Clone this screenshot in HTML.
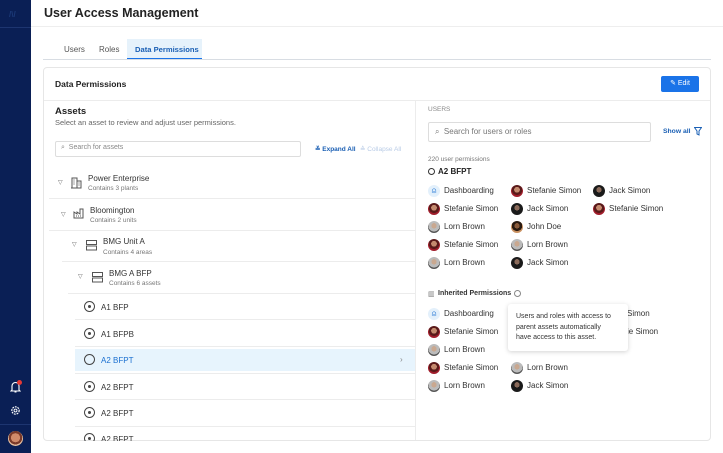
<!DOCTYPE html><html><head><style>
*{margin:0;padding:0;box-sizing:border-box}
body{width:723px;height:453px;overflow:hidden;background:#fff;font-family:"Liberation Sans",sans-serif;color:#222;position:relative}
.a{position:absolute;white-space:nowrap}
.sb{left:0;top:0;width:31px;height:453px;background:#0a1f55}
.t{font-size:8px;color:#333}
.s{font-size:6.5px;color:#777}
.av{position:absolute;width:12px;height:12px;border-radius:50%}
.f{background:radial-gradient(circle at 50% 40%,#c48a6e 0 30%,#5a1a1a 31% 55%,#a01c2a 56%)}
.j{background:radial-gradient(circle at 50% 40%,#8a6a5a 0 28%,#1a1a1a 29%)}
.l{background:radial-gradient(circle at 50% 40%,#c9a890 0 28%,#bbb 29% 60%,#555 61%)}
.d{background:radial-gradient(circle at 50% 40%,#8a5a3a 0 28%,#2a1a10 29% 55%,#c89060 56%)}
.r{background:#e3f0fb;color:#2a7ad6;font-size:8px;text-align:center;line-height:12px}
.rad{position:absolute;width:11px;height:11px;border:1.3px solid #444;border-radius:50%}
.rad::after{content:"";position:absolute;left:2.8px;top:2.8px;width:3px;height:3px;border-radius:50%;background:#444}
.hr{position:absolute;height:1px;background:#ececec}
.tri{font-size:6px;color:#666}
</style></head><body>
<div class="a sb"></div>
<div class="a" style="left:0;top:27px;width:31px;height:1px;background:#1d3570"></div>
<div class="a" style="left:9px;top:10px;font-size:8px;color:#1c3a78;font-weight:bold">/\/</div>
<svg class="a" style="left:10px;top:381px" width="11" height="12" viewBox="0 0 11 12"><path d="M2 9V5a3.5 3.5 0 017 0v4l1 1H1z M4.5 11h2" stroke="#fff" fill="none" stroke-width="1.1"/></svg>
<div class="a" style="left:17px;top:380px;width:5px;height:5px;border-radius:50%;background:#e53935"></div>
<svg class="a" style="left:10px;top:405px" width="11" height="11" viewBox="0 0 12 12"><circle cx="6" cy="6" r="4" stroke="#fff" fill="none" stroke-width="1.3" stroke-dasharray="2 1"/><circle cx="6" cy="6" r="1.6" stroke="#fff" fill="none"/></svg>
<div class="a" style="left:0;top:424px;width:31px;height:1px;background:#1d3570"></div>
<div class="a" style="left:8px;top:431px;width:15px;height:15px;border-radius:50%;background:radial-gradient(circle at 50% 45%,#d08a6a 0 40%,#7a3a2a 41% 60%,#e8c0a0 61%)"></div>

<div class="a" style="left:44px;top:6px;font-size:12.5px;font-weight:bold;color:#222">User Access Management</div>
<div class="a" style="left:31px;top:26px;width:692px;height:1px;background:#eee"></div>
<div class="a" style="left:127px;top:39px;width:75px;height:21px;background:#e6f2fb;border-bottom:2px solid #1a73e8"></div>
<div class="a" style="left:64px;top:45px;font-size:8px;color:#555">Users</div>
<div class="a" style="left:99px;top:45px;font-size:8px;color:#555">Roles</div>
<div class="a" style="left:135px;top:45px;font-size:7.6px;color:#1a5fb4;font-weight:bold">Data Permissions</div>
<div class="a" style="left:43px;top:59px;width:668px;height:1px;background:#d8dde3"></div>

<div class="a" style="left:43px;top:67px;width:668px;height:374px;border:1px solid #e6e6e6;border-radius:4px"></div>
<div class="a" style="left:55px;top:79px;font-size:8.5px;font-weight:bold;color:#222">Data Permissions</div>
<div class="a" style="left:661px;top:76px;width:38px;height:16px;background:#1a73e8;border-radius:2px;color:#fff;font-size:7px;line-height:16px;text-align:center">✎ Edit</div>
<div class="a" style="left:44px;top:100px;width:666px;height:1px;background:#ececec"></div>
<div class="a" style="left:415px;top:100px;width:1px;height:340px;background:#ececec"></div>

<div class="a" style="left:55px;top:106px;font-size:9.5px;font-weight:bold">Assets</div>
<div class="a" style="left:55px;top:118px;font-size:7.5px;color:#666">Select an asset to review and adjust user permissions.</div>
<div class="a" style="left:55px;top:141px;width:246px;height:16px;border:1px solid #ddd;border-radius:2px"></div>
<div class="a" style="left:61px;top:144px;font-size:7px;color:#888">⌕&nbsp; Search for assets</div>
<div class="a" style="left:315px;top:145px;font-size:6.5px;color:#1a5fb4;font-weight:bold">≚ Expand All</div>
<div class="a" style="left:360px;top:145px;font-size:6.5px;color:#b8cbe6">≙ Collapse All</div>

<div class="a tri" style="left:58px;top:179px">▽</div>
<svg class="a" style="left:71px;top:177px" width="11" height="12" viewBox="0 0 11 12"><path d="M1 11V1h5v10M6 4h4v7H0M2.5 3h1M2.5 5h1M2.5 7h1M7.5 6h1M7.5 8h1" stroke="#555" fill="none" stroke-width="1"/></svg>
<div class="a t" style="left:88px;top:174px">Power Enterprise</div>
<div class="a s" style="left:88px;top:185px">Contains 3 plants</div>
<div class="hr" style="left:49px;top:198px;width:366px"></div>
<div class="a tri" style="left:61px;top:211px">▽</div>
<svg class="a" style="left:73px;top:208px" width="12" height="11" viewBox="0 0 12 11"><path d="M1 10V4l3 2V4l3 2V1h3v9z M3 8h1M5 8h1M7 8h1" stroke="#555" fill="none" stroke-width="1"/></svg>
<div class="a t" style="left:90px;top:206px">Bloomington</div>
<div class="a s" style="left:90px;top:217px">Contains 2 units</div>
<div class="hr" style="left:49px;top:230px;width:366px"></div>
<div class="a tri" style="left:72px;top:241px">▽</div>
<svg class="a" style="left:86px;top:240px" width="11" height="11" viewBox="0 0 11 11"><rect x="0.5" y="0.5" width="10" height="4" stroke="#555" fill="none"/><rect x="0.5" y="6" width="10" height="4" stroke="#555" fill="none"/></svg>
<div class="a t" style="left:103px;top:237px">BMG Unit A</div>
<div class="a s" style="left:103px;top:249px">Contains 4 areas</div>
<div class="hr" style="left:62px;top:261px;width:353px"></div>
<div class="a tri" style="left:78px;top:273px">▽</div>
<svg class="a" style="left:92px;top:272px" width="11" height="11" viewBox="0 0 11 11"><rect x="0.5" y="0.5" width="10" height="4" stroke="#555" fill="none"/><rect x="0.5" y="6" width="10" height="4" stroke="#555" fill="none"/></svg>
<div class="a t" style="left:109px;top:269px">BMG A BFP</div>
<div class="a s" style="left:109px;top:280px">Contains 6 assets</div>
<div class="hr" style="left:68px;top:293px;width:347px"></div>

<div class="rad" style="left:84px;top:301px"></div><div class="a t" style="left:101px;top:303px">A1 BFP</div>
<div class="hr" style="left:75px;top:319px;width:340px"></div>
<div class="rad" style="left:84px;top:328px"></div><div class="a t" style="left:101px;top:330px">A1 BFPB</div>
<div class="hr" style="left:75px;top:346px;width:340px"></div>
<div class="a" style="left:75px;top:349px;width:340px;height:22px;background:#e7f4fd"></div>
<div class="a" style="left:84px;top:354px;width:11px;height:11px;border:1.3px solid #444;border-radius:50%"></div>
<div class="a" style="left:101px;top:356px;font-size:8px;color:#1a6fd0">A2 BFPT</div>
<div class="a" style="left:400px;top:355px;font-size:8px;color:#888">›</div>
<div class="hr" style="left:75px;top:373px;width:340px"></div>
<div class="rad" style="left:84px;top:381px"></div><div class="a t" style="left:101px;top:383px">A2 BFPT</div>
<div class="hr" style="left:75px;top:399px;width:340px"></div>
<div class="rad" style="left:84px;top:407px"></div><div class="a t" style="left:101px;top:409px">A2 BFPT</div>
<div class="hr" style="left:75px;top:426px;width:340px"></div>
<div class="rad" style="left:84px;top:433px"></div><div class="a t" style="left:101px;top:435px">A2 BFPT</div>
<div class="a" style="left:32px;top:441px;width:691px;height:12px;background:#fff"></div>

<div class="a" style="left:428px;top:106px;font-size:6.5px;color:#888">USERS</div>
<div class="a" style="left:428px;top:122px;width:223px;height:20px;border:1px solid #ddd;border-radius:2px"></div>
<div class="a" style="left:435px;top:127px;font-size:8px;color:#777">⌕&nbsp; Search for users or roles</div>
<div class="a" style="left:663px;top:128px;font-size:6.8px;color:#1a5fb4;font-weight:bold">Show all</div>
<svg class="a" style="left:694px;top:127px" width="8" height="9" viewBox="0 0 8 9"><path d="M0.5 0.5h7L5 4v4L3 7V4z" stroke="#1a5fb4" fill="none"/></svg>
<div class="a" style="left:428px;top:156px;font-size:6.5px;color:#777">220 user permissions</div>
<div class="a" style="left:428px;top:168px;width:7px;height:7px;border:1px solid #333;border-radius:50%"></div>
<div class="a" style="left:438px;top:167px;font-size:8px;font-weight:bold">A2 BFPT</div>

<div class="av r" style="left:428px;top:185px">⍝</div><div class="a t" style="left:444px;top:186px">Dashboarding</div>
<div class="av f" style="left:511px;top:185px"></div><div class="a t" style="left:527px;top:186px">Stefanie Simon</div>
<div class="av j" style="left:593px;top:185px"></div><div class="a t" style="left:609px;top:186px">Jack Simon</div>
<div class="av f" style="left:428px;top:203px"></div><div class="a t" style="left:444px;top:204px">Stefanie Simon</div>
<div class="av j" style="left:511px;top:203px"></div><div class="a t" style="left:527px;top:204px">Jack Simon</div>
<div class="av f" style="left:593px;top:203px"></div><div class="a t" style="left:609px;top:204px">Stefanie Simon</div>
<div class="av l" style="left:428px;top:221px"></div><div class="a t" style="left:444px;top:222px">Lorn Brown</div>
<div class="av d" style="left:511px;top:221px"></div><div class="a t" style="left:527px;top:222px">John Doe</div>
<div class="av f" style="left:428px;top:239px"></div><div class="a t" style="left:444px;top:240px">Stefanie Simon</div>
<div class="av l" style="left:511px;top:239px"></div><div class="a t" style="left:527px;top:240px">Lorn Brown</div>
<div class="av l" style="left:428px;top:257px"></div><div class="a t" style="left:444px;top:258px">Lorn Brown</div>
<div class="av j" style="left:511px;top:257px"></div><div class="a t" style="left:527px;top:258px">Jack Simon</div>

<div class="a" style="left:428px;top:290px;font-size:7px;color:#777">▥</div>
<div class="a" style="left:438px;top:290px;font-size:7px;font-weight:bold;color:#333">Inherited Permissions</div>
<div class="a" style="left:514px;top:290px;width:7px;height:7px;border:1px solid #888;border-radius:50%"></div>
<div class="av r" style="left:428px;top:308px">⍝</div><div class="a t" style="left:444px;top:309px">Dashboarding</div>
<div class="a t" style="left:627px;top:309px">Simon</div>
<div class="av f" style="left:428px;top:326px"></div><div class="a t" style="left:444px;top:327px">Stefanie Simon</div>
<div class="a t" style="left:627px;top:327px">ie Simon</div>
<div class="av l" style="left:428px;top:344px"></div><div class="a t" style="left:444px;top:345px">Lorn Brown</div>
<div class="av f" style="left:428px;top:362px"></div><div class="a t" style="left:444px;top:363px">Stefanie Simon</div>
<div class="av l" style="left:511px;top:362px"></div><div class="a t" style="left:527px;top:363px">Lorn Brown</div>
<div class="av l" style="left:428px;top:380px"></div><div class="a t" style="left:444px;top:381px">Lorn Brown</div>
<div class="av j" style="left:511px;top:380px"></div><div class="a t" style="left:527px;top:381px">Jack Simon</div>

<div class="a" style="left:508px;top:304px;width:120px;height:47px;background:#fff;border-radius:3px;box-shadow:0 1px 5px rgba(0,0,0,.18)"></div>
<div class="a" style="left:516px;top:312px;font-size:7px;line-height:10.5px;color:#333">Users and roles with access to<br>parent assets automatically<br>have access to this asset.</div>
</body></html>
